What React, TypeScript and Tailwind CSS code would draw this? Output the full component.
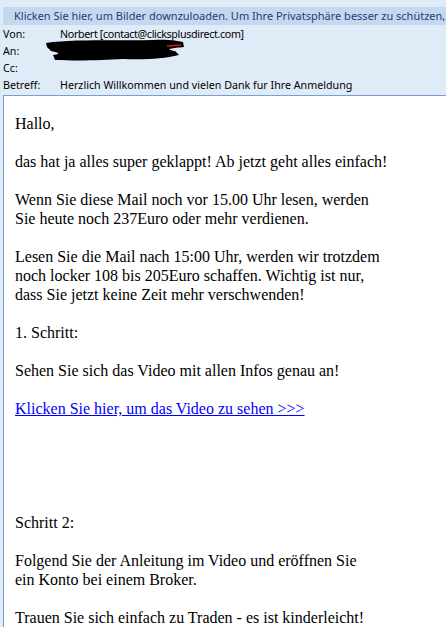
import React from 'react';

const rows = [
  { label: 'Von:', value: 'Norbert [contact@clicksplusdirect.com]' },
  { label: 'An:', value: '' },
  { label: 'Cc:', value: '' },
  { label: 'Betreff:', value: 'Herzlich Willkommen und vielen Dank fur Ihre Anmeldung' },
];

const Redaction: React.FC = () => (
  <svg width="146" height="26" viewBox="0 0 146 26" className="absolute left-[40px] top-[-6px]">
    <path
      d="M3 6 C30 2 70 4 110 3 C125 2 135 4 140 5 L141 10 C130 11 120 12 132 14 L136 18 C120 22 100 23 80 22 C60 23 40 24 12 23 L10 18 C20 17 14 15 8 14 L4 10 Z"
      fill="#000"
    />
    <path d="M124 9 L138 8" stroke="#d2161c" strokeWidth="1.5" />
  </svg>
);

export default function App() {
  return (
    <div className="w-[446px] h-[627px] overflow-hidden bg-[#e0ebf8] font-['Noto_Sans',sans-serif] text-[10.7px] text-black">
      {/* Info bar */}
      <div className="pt-[7px] pl-[3px]">
        <div className="h-[18px] bg-[#c4d8ee] pl-[11px] leading-[18px] text-[11px] text-[#1f3b7c] whitespace-nowrap overflow-hidden">
          Klicken Sie hier, um Bilder downzuloaden. Um Ihre Privatsphäre besser zu schützen, hat Outlook den Download verhindert.
        </div>
      </div>

      {/* Header */}
      <div className="pl-[3px] pt-[1px] pb-[1px]">
        {rows.map((r) => (
          <div key={r.label} className="relative flex h-[17px] items-center whitespace-nowrap">
            <span className="w-[57px] shrink-0">{r.label}</span>
            <span className={r.label === 'Von:' ? 'tracking-[-0.35px]' : ''}>{r.value}</span>
            {r.label === 'An:' && <Redaction />}
          </div>
        ))}
      </div>

      {/* Body */}
      <div className="ml-[3px] h-full border-l border-t border-[#7b9dd3] bg-white pl-[11px] pt-[18px] font-['Liberation_Serif',serif] text-[16px] leading-[19px] text-black">
        <p className="mb-[19px]">Hallo,</p>
        <p className="mb-[19px]">das hat ja alles super geklappt! Ab jetzt geht alles einfach!</p>
        <p className="mb-[19px]">
          Wenn Sie diese Mail noch vor 15.00 Uhr lesen, werden
          <br />
          Sie heute noch 237Euro oder mehr verdienen.
        </p>
        <p className="mb-[19px]">
          Lesen Sie die Mail nach 15:00 Uhr, werden wir trotzdem
          <br />
          noch locker 108 bis 205Euro schaffen. Wichtig ist nur,
          <br />
          dass Sie jetzt keine Zeit mehr verschwenden!
        </p>
        <p className="mb-[19px]">1. Schritt:</p>
        <p className="mb-[19px]">Sehen Sie sich das Video mit allen Infos genau an!</p>
        <p className="mb-[95px]">
          <a href="#" className="text-[#0000ff] underline">
            Klicken Sie hier, um das Video zu sehen &gt;&gt;&gt;
          </a>
        </p>
        <p className="mb-[19px]">Schritt 2:</p>
        <p className="mb-[19px]">
          Folgend Sie der Anleitung im Video und eröffnen Sie
          <br />
          ein Konto bei einem Broker.
        </p>
        <p className="mb-[19px]">Trauen Sie sich einfach zu Traden - es ist kinderleicht!</p>
      </div>
    </div>
  );
}
